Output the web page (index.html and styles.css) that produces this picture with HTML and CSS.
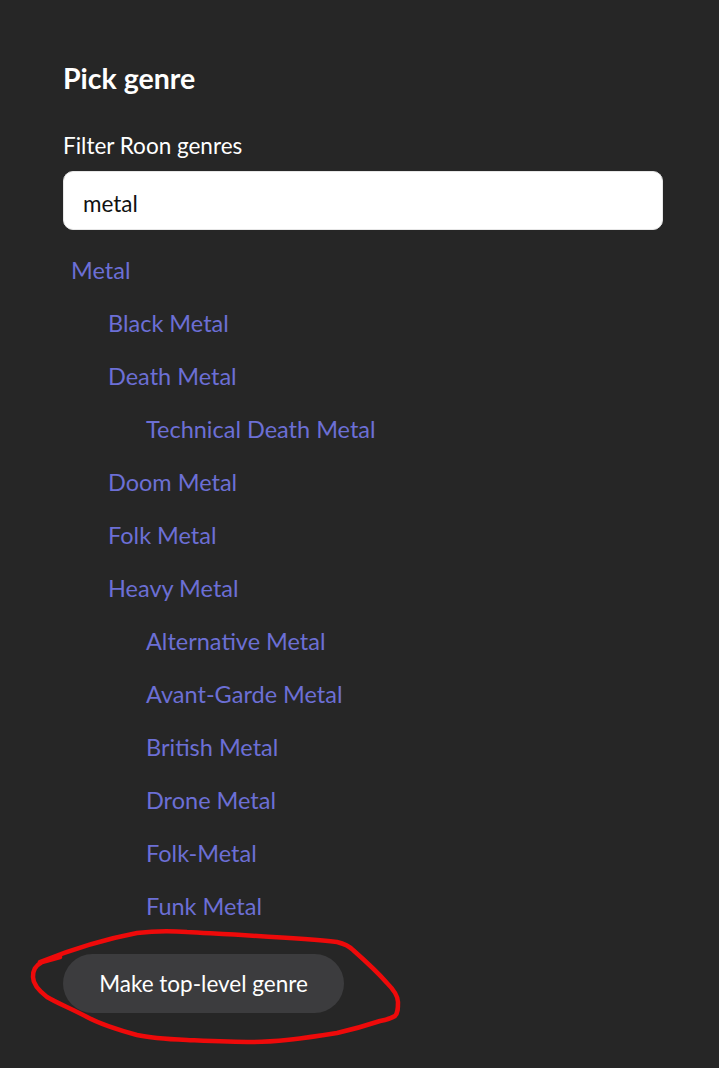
FILE: index.html
```html
<!DOCTYPE html>
<html>
<head>
<meta charset="utf-8">
<link rel="stylesheet" href="styles.css">
</head>
<body>
<div class="panel">
  <h1 class="title">Pick genre</h1>
  <label class="label">Filter Roon genres</label>
  <div class="input">metal</div>
  <ul class="genres">
    <li class="g l0">Metal</li>
    <li class="g l1">Black Metal</li>
    <li class="g l1">Death Metal</li>
    <li class="g l2">Technical Death Metal</li>
    <li class="g l1">Doom Metal</li>
    <li class="g l1">Folk Metal</li>
    <li class="g l1">Heavy Metal</li>
    <li class="g l2">Alternative Metal</li>
    <li class="g l2">Avant-Garde Metal</li>
    <li class="g l2">British Metal</li>
    <li class="g l2">Drone Metal</li>
    <li class="g l2">Folk-Metal</li>
    <li class="g l2">Funk Metal</li>
  </ul>
  <div class="actions">
    <button class="btn">Make top-level genre</button>
  </div>
</div>
<svg class="scribble" width="719" height="1068" viewBox="0 0 719 1068">
  <path d="M40 962 C70 950 100 940 137 933 C160 930 175 931 187 932 C240 935 300 938 337 942 C345 944 350 947 353 950 C370 965 380 975 387 983 C395 991 398 996 398 1002 C398 1008 398 1013 395 1016 C390 1019 385 1020 380 1021 C365 1026 350 1030 337 1033 C300 1039 275 1042 253 1042 C230 1042 210 1041 187 1040 C165 1039 150 1038 137 1035 C115 1029 100 1024 87 1017 C70 1008 57 1003 47 997 C38 990 33 984 33 977 C33 970 35 966 42 962 L60 957" fill="none" stroke="#ee0a0a" stroke-width="4.5" stroke-linecap="round" stroke-linejoin="round"/>
</svg>
</body>
</html>
```
FILE: styles.css
```css
html, body {
  margin: 0;
  padding: 0;
  background: #262626;
}
body {
  font-family: Lato, "Noto Sans", sans-serif;
  width: 719px;
  height: 1068px;
  position: relative;
  overflow: hidden;
}
.panel {
  padding: 59px 56px 0 63px;
  display: flex;
  flex-direction: column;
}
.title {
  margin: 0;
  font-size: 28.5px;
  font-weight: 700;
  color: #ffffff;
  line-height: 38px;
}
.label {
  margin-top: 35px;
  font-size: 22.5px;
  color: #ffffff;
  line-height: 28px;
}
.input {
  margin-top: 11px;
  height: 59px;
  box-sizing: border-box;
  background: #ffffff;
  border-radius: 10px;
  border: 1px solid #e6e6e6;
  padding: 5px 19px 0 19px;
  display: flex;
  align-items: center;
  font-size: 22.5px;
  color: #111;
}
.genres {
  list-style: none;
  margin: 13px 0 0 0;
  padding: 0;
  display: flex;
  flex-direction: column;
}
.g {
  font-size: 23.5px;
  line-height: 28px;
  height: 53px;
  color: #6c6fd5;
  display: flex;
  align-items: center;
}
.l0 { padding-left: 8px; }
.l1 { padding-left: 45px; }
.l2 { padding-left: 83px; }
.actions {
  margin-top: 22px;
}
.btn {
  font-family: Lato, "Noto Sans", sans-serif;
  font-size: 22.5px;
  color: #ffffff;
  background: #3c3c3e;
  border: none;
  border-radius: 30px;
  height: 59px;
  width: 281px;
  padding: 0;
}
.scribble {
  position: absolute;
  left: 0;
  top: 0;
  pointer-events: none;
}
```
